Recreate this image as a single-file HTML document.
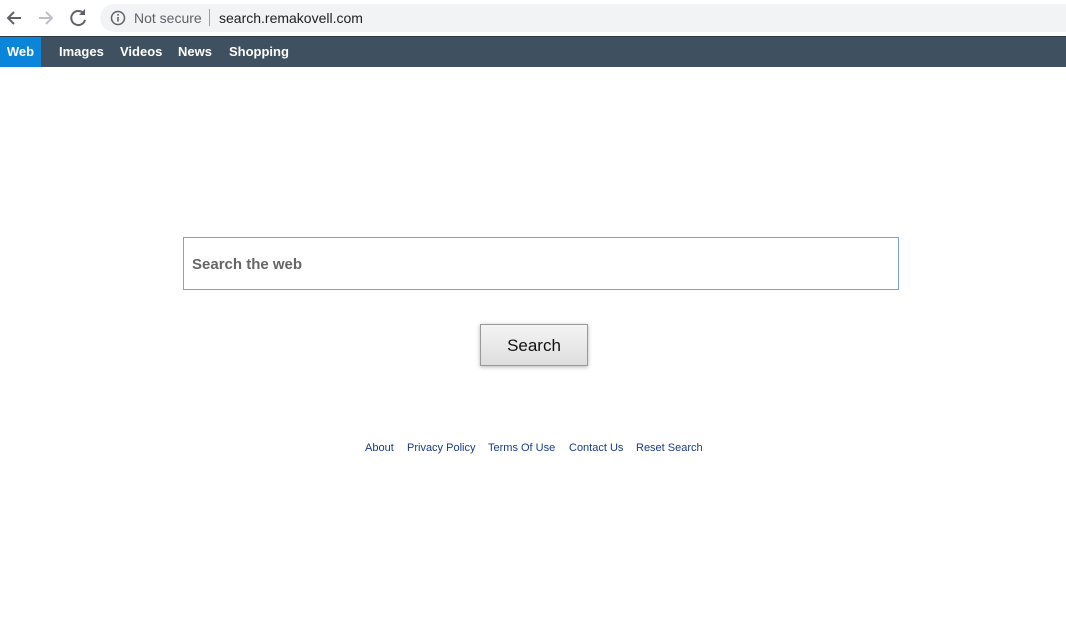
<!DOCTYPE html>
<html><head><style>
body{margin:0;width:1066px;height:644px;background:#fff;font-family:"Liberation Sans",Arial,sans-serif;position:relative;overflow:hidden}
.chrome{position:absolute;left:0;top:0;width:1066px;height:36px;background:#fff}
.omni{position:absolute;left:100px;top:4px;width:980px;height:28px;border-radius:14px;background:#f1f3f4}
.nav{position:absolute;left:0;top:36px;width:1066px;height:31px;background:#3f5160;border-top:1px solid #2c3a45;box-sizing:border-box}
.nav a{position:absolute;top:0;height:30px;line-height:30px;color:#fff;font-weight:bold;font-size:13px;text-decoration:none}
.web{background:#0a85d9;left:0;width:41px;text-align:center}
.box{position:absolute;left:183px;top:237px;width:716px;height:53px;border:1px solid #7a9ee8;box-sizing:border-box}
.box span{position:absolute;left:8px;top:18px;font-size:15px;font-weight:bold;color:#666}
.btn{position:absolute;left:480px;top:324px;width:108px;height:42px;box-sizing:border-box;border:1px solid #999;background:linear-gradient(#f4f4f4,#dedede);box-shadow:0 1px 4px rgba(0,0,0,.3);text-align:center;line-height:41px;font-size:17px;color:#111}
.links{position:absolute;top:442px;font-size:11px;color:#1a3a8a}
.links span{position:absolute;white-space:nowrap}
</style></head><body>
<div class="chrome">
<svg width="100" height="36" style="position:absolute;left:0;top:0">
<path d="M21 18H8M14 12l-6 6 6 6" stroke="#5f6368" stroke-width="2" fill="none"/>
<path d="M39 18h13M46 12l6 6-6 6" stroke="#bdc1c6" stroke-width="2" fill="none"/>
<path d="M84 14a7 7 0 1 0 1 6" stroke="#5f6368" stroke-width="2" fill="none"/><path d="M85 9v6h-6z" fill="#5f6368"/>
</svg>
<div class="omni"></div>
<svg width="20" height="20" style="position:absolute;left:109px;top:8px"><circle cx="9" cy="10" r="6.5" stroke="#5f6368" stroke-width="1.5" fill="none"/><rect x="8.2" y="9" width="1.6" height="4.5" fill="#5f6368"/><rect x="8.2" y="6" width="1.6" height="1.6" fill="#5f6368"/></svg>
<span style="position:absolute;left:134px;top:10px;font-size:14px;color:#5f6368">Not secure</span>
<span style="position:absolute;left:209px;top:9px;width:1px;height:17px;background:#9aa0a6"></span>
<span style="position:absolute;left:219px;top:10px;font-size:14px;color:#202124">search.remakovell.com</span>
</div>
<div class="nav">
<a class="web">Web</a><a style="left:59px">Images</a><a style="left:120px">Videos</a><a style="left:178px">News</a><a style="left:229px">Shopping</a>
</div>
<div class="box"><span>Search the web</span></div>
<div class="btn">Search</div>
<div class="links">
<span style="left:365px">About</span><span style="left:407px">Privacy Policy</span><span style="left:488px">Terms Of Use</span><span style="left:569px">Contact Us</span><span style="left:636px">Reset Search</span>
</div>
</body></html>
